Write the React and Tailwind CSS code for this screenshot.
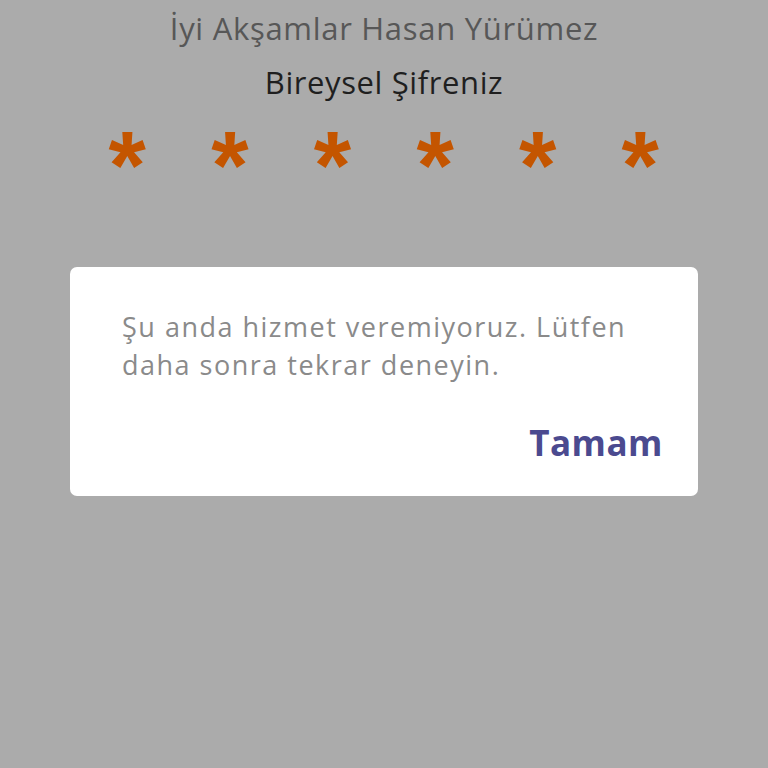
export default function App() {
  const stars = [1, 2, 3, 4, 5, 6]
  return (
    <div className="w-full h-screen bg-[#ababab] flex flex-col items-center overflow-hidden" style={{ fontFamily: '"Open Sans", "Noto Sans", sans-serif' }}>
      {/* HEADER */}
      <p className="mt-[8px] text-[31px] leading-[40px] tracking-[0.7px] text-[#575757]">İyi Akşamlar Hasan Yürümez</p>
      <p className="mt-[14px] text-[31px] leading-[40px] tracking-[0.6px] text-[#1f1f1f]">Bireysel Şifreniz</p>
      {/* PIN */}
      <div className="flex w-[616px] mt-[8px]">
        {stars.map((s) => (
          <div key={s} className="w-[102.6px] h-[110px] flex justify-center items-start">
            <span className="text-[96px] leading-[110px] font-bold text-[#c45500]" style={{ fontFamily: '"Liberation Sans", sans-serif' }}>*</span>
          </div>
        ))}
      </div>
      {/* DIALOG */}
      <div className="self-stretch mx-[70px] mt-[47px] bg-white rounded-[7px] pl-[52px] pr-[35px] pt-[41px] pb-[31px] flex flex-col">
        <p className="text-[27px] leading-[38px] tracking-[1.5px] text-[#8a8a8a]">Şu anda hizmet veremiyoruz. Lütfen daha sonra tekrar deneyin.</p>
        <button className="self-end mt-[37px] text-[35px] leading-[44px] tracking-[0.5px] font-bold text-[#4b4a8f]">Tamam</button>
      </div>
    </div>
  )
}
